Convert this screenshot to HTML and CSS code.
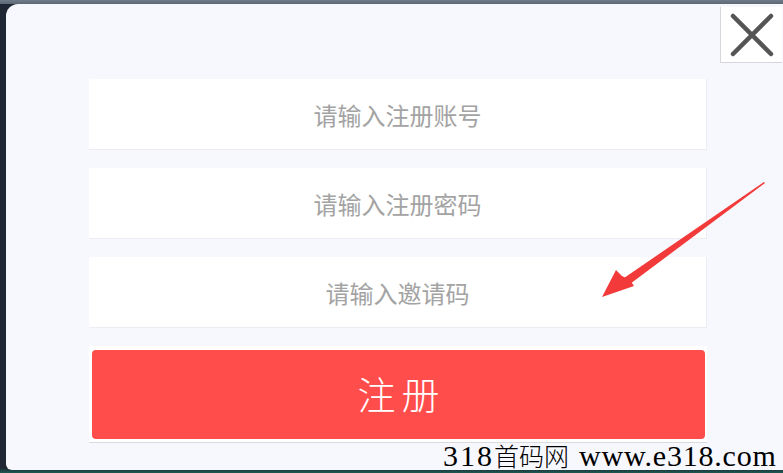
FILE: index.html
```html
<!DOCTYPE html>
<html lang="zh-CN">
<head>
  <meta charset="UTF-8">
  <meta name="viewport" content="width=device-width, initial-scale=1.0">
  <title>注册</title>
  <link rel="stylesheet" href="styles.css">
</head>
<body>
  <div class="panel">
    <button class="close" type="button" aria-label="关闭">
      <svg width="46" height="44" viewBox="0 0 46 44">
        <path d="M4 3 L42 41 M42 3 L4 41" stroke="#555" stroke-width="4.5" stroke-linecap="round" fill="none"/>
      </svg>
    </button>

    <form class="form">
      <input class="field" type="text" placeholder="请输入注册账号">
      <input class="field" type="password" placeholder="请输入注册密码">
      <input class="field" type="text" placeholder="请输入邀请码">
      <div class="submitWrap">
        <button class="submit" type="submit">注册</button>
      </div>
    </form>

    <!-- annotation arrow drawn over the screenshot -->
    <svg class="arrow" width="170" height="120" viewBox="0 0 170 120">
      <polygon points="162,2 22,98 28,104 163,3" fill="#f23a3a"/>
      <polygon points="0,117 14,90 20,96 28,100 32,106" fill="#f23a3a"/>
    </svg>
  </div>

  <div class="mark"><span class="num">318</span><span class="cjk">首码网</span><span class="url">www.e318.com</span></div>
</body>
</html>
```

FILE: styles.css
```css
html, body { margin: 0; height: 100%; overflow: hidden; }
body { background: linear-gradient(180deg, #6f7b88 0, #5d6875 4px, #1f2734 4px, #1f2734 468px, #1c5a52 100%); font-family: "Noto Sans", "Noto Sans CJK SC", sans-serif; }
.panel { position: relative; margin: 4px 0 0 6px; width: 800px; height: 466px; background: #f7f8fe; border-radius: 12px 0 0 6px; box-sizing: border-box; padding: 75px 0 0 83px; }
.form { width: 618px; display: flex; flex-direction: column; gap: 18px; margin: 0; }
.field { height: 71px; box-sizing: border-box; border: 0; border-right: 1px solid #ececf2; border-bottom: 1px solid #ececf2; background: #fff; text-align: center; font-family: "Noto Sans CJK SC", sans-serif; font-size: 24px; color: #555; outline: none; padding: 0; }
.field::placeholder { color: #a3a3a3; }
.submitWrap { background: #fff; padding: 4px 2px 3px 3px; border-bottom: 1px solid #d9d9de; margin-top: 0; }
.submit { display: block; width: 100%; height: 89px; border: 0; border-radius: 4px; background: #ff4d4c; color: #fff; font-family: "Noto Sans CJK SC", serif; font-size: 38px; font-weight: 300; letter-spacing: 6px; padding: 0 0 4px 6px; cursor: pointer; }
.close { position: absolute; top: 3px; left: 714px; width: 62px; height: 56px; padding: 0; background: #fff; border: 0; border-left: 1px solid #d6d6dc; border-bottom: 1px solid #d6d6dc; display: flex; align-items: center; justify-content: center; filter: blur(0.6px); }
.close svg { display: block; }
.arrow { position: absolute; left: 596px; top: 176px; }
.mark { position: absolute; left: 443px; top: 440px; white-space: nowrap; color: #000; line-height: 30px; }
.mark .num, .mark .url { font-family: "Liberation Serif", serif; font-size: 30px; }
.mark .num { letter-spacing: 2px; }
.mark .url { letter-spacing: 0.8px; }
.mark .cjk { font-family: "Noto Sans CJK SC", serif; font-size: 25px; font-weight: 300; margin-right: 10px; }
```
